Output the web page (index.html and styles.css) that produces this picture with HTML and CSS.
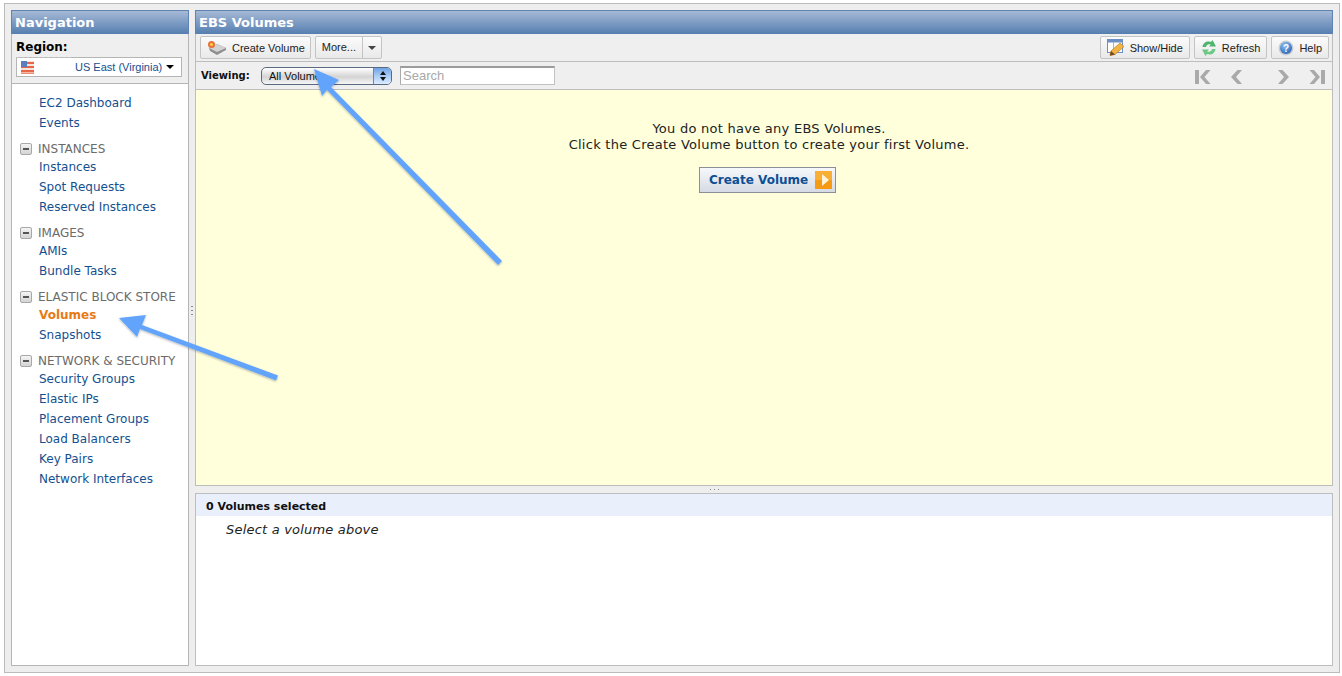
FILE: index.html
```html
<!DOCTYPE html>
<html>
<head>
	<meta charset="utf-8">
	<title>EBS Volumes</title>
	<link rel="stylesheet" href="styles.css">
</head>
<body>
	<div class="frame">
		<div class="nav">
			<h2 class="panelTitle">Navigation</h2>
			<div class="region">
				<p class="regionLabel"><span>Region:</span></p>
				<div class="regionSelect">
					<svg class="flag" width="13" height="13" viewBox="0 0 13 13">
						<rect width="13" height="13" fill="#f4e4de"/>
						<rect y="1" width="13" height="2" fill="#e8654a"/>
						<rect y="5" width="13" height="2" fill="#e8654a"/>
						<rect y="9" width="13" height="2" fill="#e8654a"/>
						<rect y="11.500" width="13" height="1.500" fill="#ee8a70"/>
						<rect width="6" height="6" fill="#5a7fc0"/>
					</svg>
					<span class="regionName">US East (Virginia)</span>
					<i class="caret"></i>
				</div>
			</div>
			<div class="navList">
				<a class="navLink">EC2 Dashboard</a>
				<a class="navLink">Events</a>
				<p class="navHead"><i class="minus"></i>INSTANCES</p>
				<a class="navLink">Instances</a>
				<a class="navLink">Spot Requests</a>
				<a class="navLink">Reserved Instances</a>
				<p class="navHead"><i class="minus"></i>IMAGES</p>
				<a class="navLink">AMIs</a>
				<a class="navLink">Bundle Tasks</a>
				<p class="navHead"><i class="minus"></i>ELASTIC BLOCK STORE</p>
				<a class="navLink current">Volumes</a>
				<a class="navLink">Snapshots</a>
				<p class="navHead"><i class="minus"></i>NETWORK &amp; SECURITY</p>
				<a class="navLink">Security Groups</a>
				<a class="navLink">Elastic IPs</a>
				<a class="navLink">Placement Groups</a>
				<a class="navLink">Load Balancers</a>
				<a class="navLink">Key Pairs</a>
				<a class="navLink">Network Interfaces</a>
			</div>
			<div class="vGrip"></div>
		</div>

		<div class="main">
			<div class="top">
				<h2 class="panelTitle">EBS Volumes</h2>
				<div class="toolbar">
					<button class="btn createBtn">
						<svg width="20" height="16" viewBox="0 0 20 16">
							<path d="M2 8 L10 4 L19 8 L19 10 L10 15 L3 11 Z" fill="#8f8f8f"/>
							<path d="M2 8 L10 4 L19 8 L10 12 Z" fill="#d2d2d2"/>
							<circle cx="4.500" cy="4.500" r="3.500" fill="#e9703a"/>
							<circle cx="4.500" cy="4.500" r="1.600" fill="#f8d04a"/>
						</svg>
						Create Volume
					</button>
					<div class="splitBtn">
						<span class="splitText">More...</span>
						<span class="splitArrow"><i class="caret small"></i></span>
					</div>
					<div class="toolRight">
						<button class="btn">
							<svg width="18" height="17" viewBox="0 0 18 17">
								<rect x=".5" y=".5" width="15" height="13" fill="#fff" stroke="#6d8fc4"/>
								<rect x="0" y="0" width="16" height="3.500" fill="#6d8fc4"/>
								<rect x="6" y="3" width="1" height="10" fill="#9db5d8"/>
								<path d="M3 16.500 L4 12 L13 4 L17 7.500 L8 15.500 Z" fill="#f2b544" stroke="#c07a20" stroke-width=".7"/>
								<path d="M3 16.500 L4 12 L8 15.500 Z" fill="#6b4a24"/>
							</svg>
							Show/Hide
						</button>
						<button class="btn">
							<svg width="16" height="16" viewBox="0 0 16 16">
								<path d="M1.500 7 C2 2.500 6 .5 10 2 L11.500 0 L15 6.500 L8 6.500 L9.800 4.600 C7.500 3.600 5.500 4.500 5 7 Z" fill="#4fb56a"/>
								<path d="M14.500 9 C14 13.500 10 15.500 6 14 L4.500 16 L1 9.500 L8 9.500 L6.200 11.400 C8.500 12.400 10.500 11.500 11 9 Z" fill="#6cc884"/>
							</svg>
							Refresh
						</button>
						<button class="btn">
							<svg width="16" height="16" viewBox="0 0 16 16">
								<defs>
									<radialGradient id="helpBall" cx=".4" cy=".3" r=".8">
										<stop offset="0" stop-color="#8fc0f0"/>
										<stop offset="1" stop-color="#1f5fb8"/>
									</radialGradient>
								</defs>
								<circle cx="8" cy="8" r="7.500" fill="#c8ccd2"/>
								<circle cx="8" cy="8" r="6" fill="url(#helpBall)"/>
								<text x="8" y="11.500" class="helpMark">?</text>
							</svg>
							Help
						</button>
					</div>
				</div>
				<div class="filterBar">
					<span class="viewLabel">Viewing:</span>
					<div class="viewSelect">
						<span>All Volumes</span>
						<span class="stepper">
							<i class="stepUp"></i>
							<i class="stepDown"></i>
						</span>
					</div>
					<input class="search" type="text" placeholder="Search">
					<div class="pager">
						<div class="pageGroup">
							<svg width="16" height="14" viewBox="0 0 16 14"><path d="M0 0H4V14H0Z M11 0L15.500 0L9.500 7L15.500 14L11 14L5 7Z" fill="#a9a9a9"/></svg>
							<svg width="11" height="14" viewBox="0 0 11 14"><path d="M6.500 0L11 0L5 7L11 14L6.500 14L0 7Z" fill="#a9a9a9"/></svg>
						</div>
						<div class="pageGroup">
							<svg width="11" height="14" viewBox="0 0 11 14"><path d="M4.500 0L0 0L6 7L0 14L4.500 14L11 7Z" fill="#a9a9a9"/></svg>
							<svg width="16" height="14" viewBox="0 0 16 14"><path d="M16 0H12V14H16Z M5 0L.5 0L6.500 7L.5 14L5 14L11 7Z" fill="#a9a9a9"/></svg>
						</div>
					</div>
				</div>
				<div class="empty">
					<p>You do not have any EBS Volumes.</p>
					<p>Click the Create Volume button to create your first Volume.</p>
					<button class="bigBtn">
						Create Volume
						<span class="bigArrow"><i></i></span>
					</button>
				</div>
			</div>
			<div class="hGrip"></div>
			<div class="details">
				<p class="detailsHead">0 Volumes selected</p>
				<p class="detailsNote">Select a volume above</p>
			</div>
		</div>
	</div>

	<!-- the two blue annotation arrows sit on top of the whole page -->
	<svg class="arrows" width="1342" height="676" viewBox="0 0 1342 676">
		<defs>
			<filter id="arrowShadow" x="-10%" y="-10%" width="120%" height="120%">
				<feDropShadow dx="0" dy="1" stdDeviation="1.200" flood-color="#000" flood-opacity=".3"/>
			</filter>
		</defs>
		<g fill="#62a4fb" filter="url(#arrowShadow)">
			<path d="M314 69 L339 80 L331 87 L502 261 L498 265 L327 90 L322 96 Z"/>
			<path d="M119 318 L146 315 L142 325 L278 375.500 L276 380.500 L140 329 L137 337 Z"/>
		</g>
	</svg>
</body>
</html>
```

FILE: styles.css
```css
*{
	margin:0;
	padding:0;
	box-sizing:border-box;
}

body{
	background:white;
	font-family:"DejaVu Sans", sans-serif;
	overflow:hidden;
}

.frame{
	display:grid;
	grid-template-columns:178px 1138px;
	column-gap:6px;
	width:1336px;
	height:670px;
	margin:3px 0 0 4px;
	padding:6px;
	background:#eeeeee;
	border:1px solid #bbbbbb;
}

.panelTitle{
	height:24px;
	padding-left:3px;
	font-size:13px;
	font-weight:bold;
	line-height:23px;
	color:white;
	background:linear-gradient(#a6b9d6, #557eb0);
	border:1px solid #5f84b4;
	border-bottom:none;
}

/* left column */
.nav{
	position:relative;
	display:flex;
	flex-direction:column;
	background:white;
}

.region{
	height:50px;
	padding:4px 4px 0;
	background:#efefef;
	border:1px solid #b5b5b5;
	border-top:none;
}

.regionLabel{
	height:20px;
	font-size:12px;
	font-weight:bold;
	line-height:19px;
	color:black;
}

.regionLabel span{
	display:inline-block;
	height:20px;
	width:55px;
	border-bottom:1px dashed #c4c4c4;
}

.regionSelect{
	display:flex;
	align-items:center;
	width:166px;
	height:20px;
	margin-top:-1px;
	padding:0 6px 0 4px;
	background:white;
	border:1px solid #b5b5b5;
	font-family:"Liberation Sans", sans-serif;
	font-size:11px;
	white-space:nowrap;
	color:#15508f;
}

.flag{
	flex:none;
}

.regionName{
	margin-left:41px;
	margin-right:4px;
}

.caret{
	display:block;
	flex:none;
	width:0;
	height:0;
	border-left:4px solid transparent;
	border-right:4px solid transparent;
	border-top:4px solid black;
}

.caret.small{
	border-top-color:#444;
}

.navList{
	flex:1;
	padding:9px 0 0 27px;
	border:1px solid #b5b5b5;
	border-top:none;
}

.navLink{
	display:block;
	height:20px;
	font-size:12px;
	line-height:20px;
	color:#14508f;
}

.navLink.current{
	font-weight:bold;
	color:#e87a14;
}

.navHead{
	display:flex;
	align-items:center;
	height:16px;
	margin:8px 0 0 -19px;
	font-size:12px;
	color:#6b6b6b;
}

.minus{
	position:relative;
	flex:none;
	width:12px;
	height:12px;
	margin-right:6px;
	background:linear-gradient(#f4f4f4, #d4d4d4);
	border:1px solid #a8a8a8;
	border-radius:2px;
}

.minus::after{
	content:"";
	position:absolute;
	left:2px;
	top:4px;
	width:6px;
	height:2px;
	background:#555;
}

.vGrip{
	position:absolute;
	top:296px;
	right:-4px;
	width:2px;
	height:12px;
	background:repeating-linear-gradient(#8c8c8c 0 1px, transparent 1px 4px);
}

/* right column */
.main{
	display:flex;
	flex-direction:column;
}

.top{
	display:flex;
	flex-direction:column;
	height:476px;
}

.toolbar{
	display:flex;
	align-items:center;
	gap:4px;
	height:28px;
	padding:0 3px 0 4px;
	background:#efefef;
	border:1px solid #bdbdbd;
	border-top:none;
}

.btn{
	display:flex;
	align-items:center;
	gap:5px;
	height:23px;
	padding:0 6px;
	font-family:"Liberation Sans", sans-serif;
	font-size:11px;
	color:#222;
	background:linear-gradient(#fbfbfb, #e9e9e9);
	border:1px solid #c4c4c4;
	border-radius:2px;
}

.createBtn{
	padding-right:5px;
}

.splitBtn{
	display:flex;
	align-items:stretch;
	height:23px;
	font-family:"Liberation Sans", sans-serif;
	font-size:11px;
	line-height:21px;
	color:#222;
	background:linear-gradient(#fbfbfb, #e9e9e9);
	border:1px solid #c4c4c4;
	border-radius:2px;
}

.splitText{
	padding:0 6px;
	border-right:1px solid #c4c4c4;
}

.splitArrow{
	display:flex;
	align-items:center;
	padding:0 5px;
}

.toolRight{
	display:flex;
	gap:4px;
	margin-left:auto;
}

.filterBar{
	display:flex;
	align-items:center;
	flex:none;
	height:27px;
	padding-left:5px;
	background:#efefef;
	border-left:1px solid #bdbdbd;
	border-right:1px solid #bdbdbd;
}

.viewLabel{
	width:60px;
	font-size:10px;
	font-weight:bold;
	color:#111;
}

.viewSelect{
	display:flex;
	align-items:center;
	justify-content:space-between;
	width:131px;
	height:18px;
	padding-left:7px;
	font-family:"Liberation Sans", sans-serif;
	font-size:11px;
	color:#111;
	background:linear-gradient(#ffffff, #d4d4d4 55%, #f6f6f6);
	border:1px solid #5b6a80;
	border-radius:5px;
	overflow:hidden;
}

.stepper{
	display:flex;
	flex-direction:column;
	align-items:center;
	justify-content:center;
	gap:2px;
	width:18px;
	height:100%;
	background:linear-gradient(#6fa2e4, #a9cdf6 50%, #dcecff);
	border-left:1px solid #6c87b0;
}

.stepUp,
.stepDown{
	width:0;
	height:0;
	border-left:3px solid transparent;
	border-right:3px solid transparent;
}

.stepUp{
	border-bottom:4px solid #111;
}

.stepDown{
	border-top:4px solid #111;
}

.search{
	width:155px;
	height:19px;
	margin-left:8px;
	padding:0 2px 2px;
	font-family:"Liberation Sans", sans-serif;
	font-size:13px;
	background:white;
	border:1px solid #c2c2c2;
	border-top:2px solid #9c9c9c;
	border-left:1px solid #aaa;
	outline:none;
}

.search::placeholder{
	color:#a8a8a8;
	opacity:1;
}

.pager{
	display:flex;
	align-items:center;
	gap:36px;
	margin-left:auto;
	margin-top:2px;
	padding-right:7px;
}

.pageGroup{
	display:flex;
	gap:20px;
}

.empty{
	flex:1;
	padding:31px 0 0 10px;
	font-size:13px;
	line-height:16px;
	letter-spacing:.26px;
	text-align:center;
	color:#222;
	background:#ffffdc;
	border:1px solid #bdbdbd;
}

.bigBtn{
	display:inline-flex;
	align-items:center;
	gap:7px;
	width:137px;
	height:26px;
	margin:14px 3px 0 0;
	padding-left:9px;
	font-family:"DejaVu Sans", sans-serif;
	font-size:12px;
	font-weight:bold;
	color:#0d4f94;
	background:linear-gradient(#f6f8fb, #d5dbe4);
	border:1px solid #8b8f96;
}

.bigArrow{
	display:flex;
	align-items:center;
	justify-content:center;
	width:17px;
	height:18px;
	background:linear-gradient(#f9ae34 50%, #f59a12 50%);
}

.bigArrow i{
	display:block;
	width:0;
	height:0;
	margin-left:3px;
	border-top:6px solid transparent;
	border-bottom:6px solid transparent;
	border-left:7px solid #fff4d8;
}

.hGrip{
	flex:none;
	height:7px;
	background:repeating-linear-gradient(90deg, #8c8c8c 0 1px, transparent 1px 4px) 515px 3px / 12px 1px no-repeat;
}

.details{
	flex:1;
	background:white;
	border:1px solid #bdbdbd;
}

.detailsHead{
	height:22px;
	padding-left:10px;
	font-size:11px;
	font-weight:bold;
	line-height:25px;
	color:#111;
	background:#e9f0fb;
}

.detailsNote{
	padding:6px 0 0 30px;
	font-size:13px;
	font-style:italic;
	line-height:16px;
	letter-spacing:.2px;
	color:#222;
}

.arrows{
	position:absolute;
	left:0;
	top:0;
	pointer-events:none;
}

.helpMark{
	font-family:"Liberation Sans", sans-serif;
	font-size:10px;
	font-weight:bold;
	text-anchor:middle;
	fill:white;
}
```
